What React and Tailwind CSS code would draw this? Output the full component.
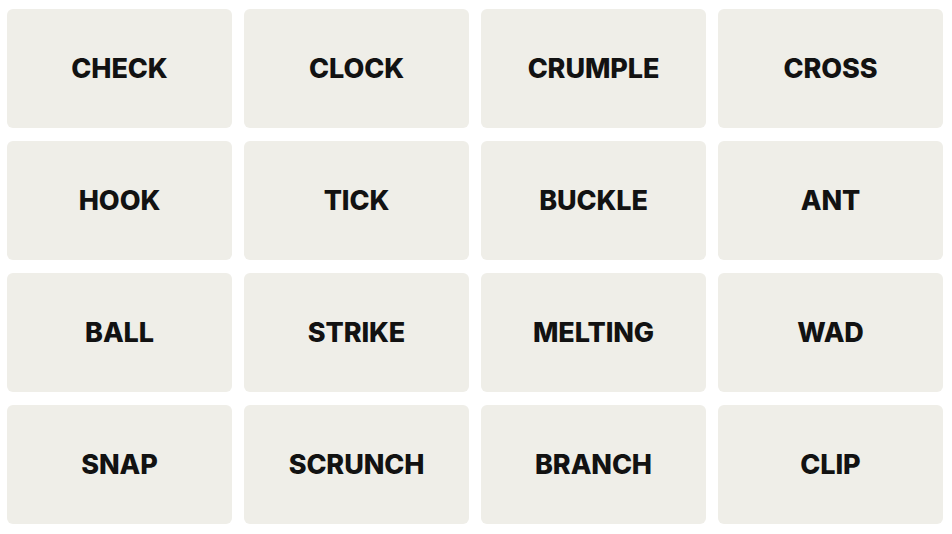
import React from "react";

const words = [
  "CHECK", "CLOCK", "CRUMPLE", "CROSS",
  "HOOK", "TICK", "BUCKLE", "ANT",
  "BALL", "STRIKE", "MELTING", "WAD",
  "SNAP", "SCRUNCH", "BRANCH", "CLIP",
];

export default function App() {
  return (
    <div className="w-[952px] h-[534px] bg-white pl-[7px] pt-[9px]">
      <div className="grid grid-cols-[repeat(4,225px)] auto-rows-[119px] gap-x-[12px] gap-y-[13px]">
        {words.map((w) => (
          <div
            key={w}
            className="flex items-center justify-center rounded-md bg-[#efeee8] pt-[2px] text-[#121212] text-[27px] font-extrabold tracking-[-0.1px]"
            style={{ fontFamily: "Inter, 'Liberation Sans', sans-serif" }}
          >
            {w}
          </div>
        ))}
      </div>
    </div>
  );
}
